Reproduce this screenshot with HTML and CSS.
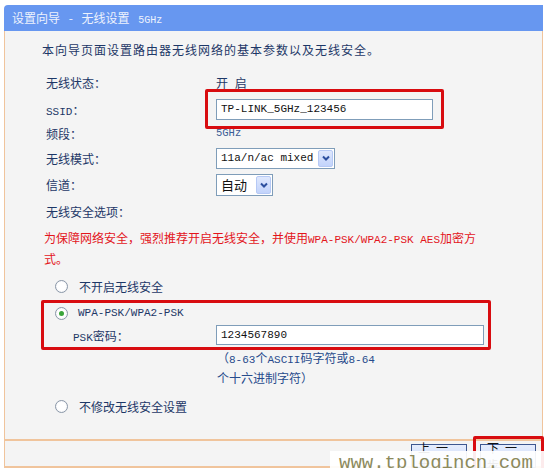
FILE: index.html
```html
<!DOCTYPE html>
<html lang="zh-CN">
<head>
<meta charset="utf-8">
<title>设置向导 - 无线设置 5GHz</title>
<link rel="stylesheet" href="styles.css">
</head>
<body>
<div class="panel">
  <div class="hd">设置向导 - 无线设置 <span class="m">5GHz</span></div>
  <div class="bd">
    <p class="intro">本向导页面设置路由器无线网络的基本参数以及无线安全。</p>
    <div class="row r-state"><span class="lbl">无线状态：</span><span class="val on-off">开 启</span></div>
    <div class="row r-ssid"><span class="lbl"><span class="m">SSID</span>：</span><span class="hl"><span class="input ssid m">TP-LINK_5GHz_123456</span></span></div>
    <div class="row r-band"><span class="lbl">频段：</span><span class="val blue m">5GHz</span></div>
    <div class="row r-mode"><span class="lbl">无线模式：</span><span class="select mode"><span class="sel-txt m">11a/n/ac mixed</span><span class="sel-btn"><svg viewBox="0 0 10 10" width="10" height="10"><path d="M2 3.5 L5 6.5 L8 3.5" fill="none" stroke="#2c4f9e" stroke-width="2"/></svg></span></span></div>
    <div class="row r-chan"><span class="lbl">信道：</span><span class="select chan"><span class="sel-txt">自动</span><span class="sel-btn"><svg viewBox="0 0 10 10" width="10" height="10"><path d="M2 3.5 L5 6.5 L8 3.5" fill="none" stroke="#2c4f9e" stroke-width="2"/></svg></span></span></div>
    <div class="row r-opt"><span class="lbl wide">无线安全选项：</span></div>
    <p class="warn">为保障网络安全，强烈推荐开启无线安全，并使用<span class="m">WPA-PSK/WPA2-PSK AES</span>加密方式。</p>
    <div class="row r-radio1"><span class="radio"></span><span class="rtxt">不开启无线安全</span></div>
    <div class="wpa-box">
      <div class="row r-wpa"><span class="radio on"></span><span class="rtxt m">WPA-PSK/WPA2-PSK</span></div>
      <div class="row r-psk"><span class="lbl psk"><span class="m">PSK</span>密码：</span><span class="input pwd m">1234567890</span></div>
    </div>
    <p class="hint">（<span class="m">8-63</span>个<span class="m">ASCII</span>码字符或<span class="m">8-64</span>个十六进制字符）</p>
    <div class="row r-radio3"><span class="radio"></span><span class="rtxt">不修改无线安全设置</span></div>
  </div>
  <div class="ft">
    <span class="btn">上一步</span>
    <span class="next-wrap"><span class="btn">下一步</span></span>
  </div>
  <div class="wm">www.tplogincn.com</div>
</div>
</body>
</html>
```

FILE: styles.css
```css
html, body {
  margin: 0;
  padding: 0;
  background: #ffffff;
}
body {
  font-family: "Noto Sans CJK SC", "Liberation Sans", sans-serif;
  font-size: 12px;
  color: #1d3767;
}
.m {
  font-family: "Liberation Mono", "Noto Sans CJK SC", monospace;
  font-size: 11px;
}
.panel {
  position: relative;
  margin: 5px 0 0 4px;
  width: 539px;
}
.hd {
  height: 26px;
  line-height: 25px;
  background: #6797f0;
  color: #edf2fd;
  padding-left: 8px;
  border-radius: 4px 0 0 0;
  font-size: 12px;
  word-spacing: 6px;
}
.hd .m { font-size: 10px; }
.bd {
  height: 408px;
  background: #f4f4f4;
  border-left: 1px solid #f0c49c;
  border-right: 1px solid #f0c49c;
  border-bottom: 2px solid #f0c49c;
  padding-left: 37px;
}
.intro {
  margin: 0;
  padding-top: 9px;
  height: 20px;
  line-height: 20px;
  letter-spacing: 1px;
}
.row {
  display: flex;
  align-items: center;
}
.lbl {
  width: 174px;
  padding-left: 4px;
  box-sizing: border-box;
  flex: none;
}
.lbl.wide { width: auto; }
.on-off { word-spacing: 4px; }
.blue { color: #3b5b95; font-size: 10.5px; }
.r-state { margin-top: 10px; height: 24px; }
.r-ssid { height: 30px; }
.r-band { height: 18px; }
.r-mode { height: 32px; }
.r-chan { height: 21px; }
.r-opt { height: 32px; }
.input {
  display: inline-flex;
  align-items: center;
  box-sizing: border-box;
  height: 21px;
  background: #ffffff;
  border: 1px solid #7f9db9;
  padding-left: 4px;
  color: #111;
}
.ssid { width: 217px; }
.hl {
  position: relative;
  display: inline-flex;
}
.hl::after {
  content: "";
  position: absolute;
  left: -11px;
  right: -11px;
  top: -10px;
  bottom: -9px;
  border: 3px solid #d80c10;
  border-radius: 2px;
}
.select {
  display: inline-flex;
  align-items: center;
  box-sizing: border-box;
  height: 21px;
  background: #fff;
  border: 1px solid #7f9db9;
  padding: 1px;
  color: #111;
}
.select.mode { width: 119px; }
.select.chan { width: 57px; height: 22px; }
.sel-txt {
  flex: 1;
  padding-left: 3px;
  white-space: nowrap;
}
.select.chan .sel-txt { font-size: 13px; }
.sel-btn {
  width: 15px;
  height: 100%;
  box-sizing: border-box;
  background: linear-gradient(#dfe8fd, #c2d3fb);
  border: 1px solid #b6c9f5;
  border-radius: 2px;
  display: flex;
  align-items: center;
  justify-content: center;
}
.warn {
  margin: 0;
  width: 440px;
  height: 42px;
  line-height: 21px;
  color: #e3151c;
  padding-left: 2px;
}
.warn .m, .hint .m { line-height: 0; }
.r-radio1 { height: 28px; margin-top: 3px; padding-left: 13px; }
.radio {
  width: 13px;
  height: 13px;
  box-sizing: border-box;
  border-radius: 50%;
  border: 1px solid #8a97a8;
  background: radial-gradient(circle, #ffffff 50%, #e7e9ee 100%);
  position: relative;
  flex: none;
}
.radio.on::after {
  content: "";
  position: absolute;
  left: 3px;
  top: 3px;
  width: 5px;
  height: 5px;
  border-radius: 50%;
  background: #3aa53a;
}
.rtxt { margin-left: 11px; }
.wpa-box {
  margin-left: -1px;
  width: 450px;
  height: 50px;
  box-sizing: border-box;
  border: 3px solid #d80c10;
  border-radius: 2px;
}
.r-wpa { height: 20px; padding-left: 11px; }
.r-wpa .rtxt { margin-left: 10px; }
.r-psk { height: 24px; }
.lbl.psk { width: 172px; padding-left: 29px; }
.pwd { width: 268px; height: 20px; }
.hint {
  margin: -2px 0 0 175px;
  width: 160px;
  height: 40px;
  line-height: 20px;
  color: #274b8c;
}
.r-radio3 { height: 36px; padding-left: 13px; }
.ft {
  background: #f4f4f4;
  border-left: 1px solid #f0c49c;
  border-right: 1px solid #f0c49c;
  border-bottom: 2px solid #f0c49c;
  display: flex;
  justify-content: flex-end;
  align-items: flex-start;
  padding-top: 3px;
  padding-right: 6px;
  height: 22px;
}
.btn {
  display: inline-flex;
  align-items: center;
  justify-content: center;
  box-sizing: border-box;
  width: 56px;
  height: 24px;
  background: linear-gradient(#e6edfd, #c6d5f7);
  border: 1px solid #3e5790;
  color: #111;
  font-size: 12px;
  letter-spacing: 6px;
  padding-left: 6px;
}
.next-wrap {
  position: relative;
  margin-left: 13px;
  display: inline-flex;
}
.next-wrap::after {
  content: "";
  position: absolute;
  left: -7px;
  right: -8px;
  top: -8px;
  bottom: -12px;
  border: 3px solid #d80c10;
  border-radius: 2px;
}
.wm {
  position: absolute;
  left: 326px;
  top: 446px;
  width: 215px;
  height: 23px;
  background: rgba(255, 255, 255, 0.92);
  font-family: "Liberation Mono", "DejaVu Sans Mono", monospace;
  font-size: 19px;
  line-height: 25px;
  color: #8c8a5c;
  padding-left: 9px;
  box-sizing: border-box;
  overflow: hidden;
  white-space: nowrap;
}
```
